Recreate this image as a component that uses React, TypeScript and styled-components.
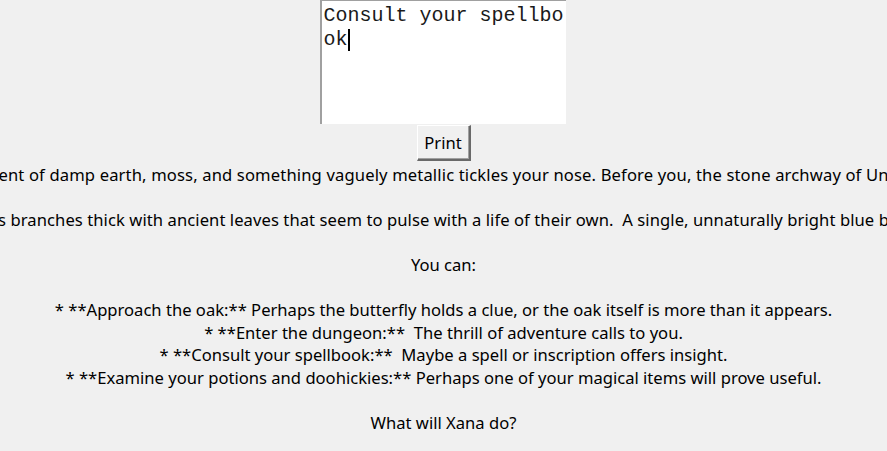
import React, {FC} from "react";
import styled, {createGlobalStyle} from "styled-components";

const GlobalStyle = createGlobalStyle`
  html, body {
    margin: 0;
    padding: 0;
    background: #f0f0f0;
    overflow: hidden;
  }
`

const WindowStyled = styled.div`
  width: 887px;
  height: 451px;
  display: flex;
  flex-direction: column;
  align-items: center;
  overflow: hidden;
  background: #f0f0f0;
  font-family: "Noto Sans", "Open Sans", sans-serif;
`

const EntryStyled = styled.div`
  box-sizing: border-box;
  width: 246px;
  height: 124px;
  margin-left: -2px;
  background: #ffffff;
  border-left: 2px solid #a0a0a0;
  border-top: 1px solid #a0a0a0;
  padding: 3px 0 0 2px;
  font-family: "Liberation Mono", "Courier New", monospace;
  font-size: 20px;
  line-height: 24px;
  color: #1a1a1a;
  white-space: pre;
`

const CaretStyled = styled.span`
  display: inline-block;
  width: 2px;
  height: 22px;
  vertical-align: -6px;
  background: #000;
`

const ButtonStyled = styled.button`
  box-sizing: border-box;
  width: 54px;
  height: 36px;
  margin-top: 1px;
  padding: 0;
  background: #f0f0f0;
  border-style: solid;
  border-width: 1px 2px 2px 1px;
  border-color: #ffffff #696969 #696969 #ffffff;
  box-shadow: inset -1px -1px 0 #a0a0a0;
  font-family: inherit;
  font-size: 16.6px;
  color: #000;
`

const LabelStyled = styled.div`
  align-self: stretch;
  display: flex;
  flex-direction: column;
  align-items: center;
  margin-top: 3px;
  font-size: 16.6px;
  line-height: 22.5px;
  color: #000;
`

const LineStyled = styled.div<{$spread?: number}>`
  white-space: pre;
  height: 22.5px;
  letter-spacing: ${({$spread}) => $spread ?? 0}px;
`

const lines: {text: string; spread?: number}[] = [
  {text: "ent of damp earth, moss, and something vaguely metallic tickles your nose. Before you, the stone archway of Un", spread: 0.14},
  {text: ""},
  {text: "s branches thick with ancient leaves that seem to pulse with a life of their own.  A single, unnaturally bright blue b", spread: 0.07},
  {text: ""},
  {text: "You can:"},
  {text: ""},
  {text: "* **Approach the oak:** Perhaps the butterfly holds a clue, or the oak itself is more than it appears."},
  {text: "* **Enter the dungeon:**  The thrill of adventure calls to you."},
  {text: "* **Consult your spellbook:**  Maybe a spell or inscription offers insight."},
  {text: "* **Examine your potions and doohickies:** Perhaps one of your magical items will prove useful."},
  {text: ""},
  {text: "What will Xana do?"},
]

const App: FC = () => (
  <>
    <GlobalStyle/>
    <WindowStyled>
      <EntryStyled>
        {"Consult your spellbo\nok"}
        <CaretStyled/>
      </EntryStyled>
      <ButtonStyled>Print</ButtonStyled>
      <LabelStyled>
        {lines.map((line, i) => (
          <LineStyled key={i} $spread={line.spread}>{line.text}</LineStyled>
        ))}
      </LabelStyled>
    </WindowStyled>
  </>
)

export default App
